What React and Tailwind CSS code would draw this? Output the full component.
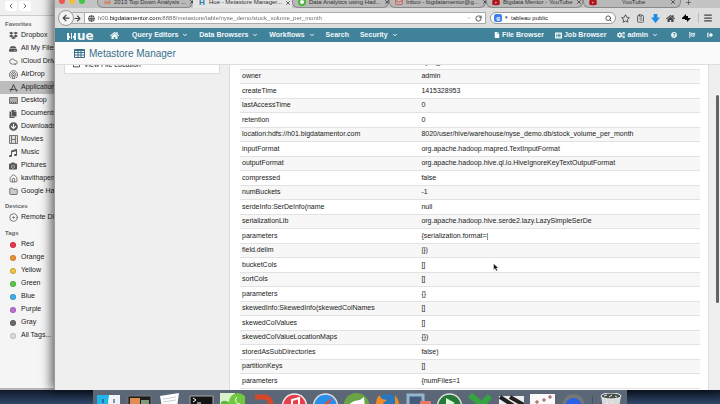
import React from "react";
import {
  FaHome, FaFile, FaListAlt, FaCogs, FaQuestionCircle, FaFlagCheckered, FaSignOutAlt,
  FaDropbox, FaHdd, FaCopy, FaArrowCircleDown, FaMusic, FaCamera, FaYoutube,
  FaArrowLeft, FaArrowRight, FaGlobe, FaRegStar, FaRegFolder,
} from "react-icons/fa";
import {
  Cloud, House, Disc, ChevronDown, ChevronLeft, ChevronRight, RotateCw, Search,
  ClipboardList, Menu, X, Plus, Mail, Radio, Folder,
} from "lucide-react";

const AppsIcon = () => (
  <svg viewBox="0 0 18 16" className="h-2 w-[9px]" fill="none" stroke="#444" strokeWidth="2">
    <path d="M3 15 9 1l6 14M1 11h10M13 9l4 5" />
  </svg>
);

const AirDropIcon = () => (
  <svg viewBox="0 0 18 18" className="size-[9px]" fill="none" stroke="#555" strokeWidth="1.5">
    <path d="M4 16a8.200 8.200 0 1 1 10 0M6 13.500a5 5 0 1 1 6 0M7.500 11a2.200 2.200 0 1 1 3 0M9 10l-3 7h6z" />
  </svg>
);

const DesktopIcon = () => (
  <svg viewBox="0 0 9 7" className="h-[7px] w-[9px]">
    <path d="M.5.5h8v6h-8z" fill="#aaa" stroke="#777" />
    <path d="M2 5.500h5" stroke="#555" strokeDasharray="1 1" />
  </svg>
);

const MoviesIcon = () => (
  <svg viewBox="0 0 9 9" className="size-[9px]" fill="#ddd" stroke="#777">
    <path d="M.5.5h8v8h-8zM2.500.5v8M6.500.5v8M2.500 4.500h4" />
  </svg>
);

const favorites = [
  ["Dropbox", <FaDropbox size={9} />],
  ["All My Files", <FaHdd size={8} />],
  ["iCloud Drive", <Cloud size={9} />],
  ["AirDrop", <AirDropIcon />],
  ["Applications", <AppsIcon />],
  ["Desktop", <DesktopIcon />],
  ["Documents", <FaCopy size={8} />],
  ["Downloads", <FaArrowCircleDown size={9} />],
  ["Movies", <MoviesIcon />],
  ["Music", <FaMusic size={8} />],
  ["Pictures", <FaCamera size={8} />],
  ["kavithapen", <House size={9} />],
  ["Google Hacks", <Folder size={9} fill="#ccc" />],
];

const tags = [
  ["Red", "bg-[#f0384a]"],
  ["Orange", "bg-[#ee9238]"],
  ["Yellow", "bg-[#f0c341]"],
  ["Green", "bg-[#5cc84c]"],
  ["Blue", "bg-[#3cb0ea]"],
  ["Purple", "bg-[#bd70d4]"],
  ["Gray", "bg-[#6b6b6b]"],
  ["All Tags...", "bg-[#dcdcdc]"],
];

const rows = [
  ["owner", "admin"],
  ["createTime", "1415328953"],
  ["lastAccessTime", "0"],
  ["retention", "0"],
  ["location:hdfs://h01.bigdatamentor.com", "8020/user/hive/warehouse/nyse_demo.db/stock_volume_per_month"],
  ["inputFormat", "org.apache.hadoop.mapred.TextInputFormat"],
  ["outputFormat", "org.apache.hadoop.hive.ql.io.HiveIgnoreKeyTextOutputFormat"],
  ["compressed", "false"],
  ["numBuckets", "-1"],
  ["serdeInfo:SerDeInfo(name", "null"],
  ["serializationLib", "org.apache.hadoop.hive.serde2.lazy.LazySimpleSerDe"],
  ["parameters", "{serialization.format=|"],
  ["field.delim", "|})"],
  ["bucketCols", "[]"],
  ["sortCols", "[]"],
  ["parameters", "{}"],
  ["skewedInfo:SkewedInfo(skewedColNames", "[]"],
  ["skewedColValues", "[]"],
  ["skewedColValueLocationMaps", "{})"],
  ["storedAsSubDirectories", "false)"],
  ["partitionKeys", "[]"],
  ["parameters", "{numFiles=1"],
];

function SideItem({ label, icon, active }) {
  return (
    <li>
      <button className={`flex h-[13px] w-full items-center gap-[3px] pl-2 text-left ${active ? "bg-[#bcbcbc]" : ""}`}>
        <span className="flex w-[10px] shrink-0 justify-center text-[#555]">{icon}</span>
        <span className="whitespace-nowrap">{label}</span>
      </button>
    </li>
  );
}

function Finder() {
  return (
    <aside className="absolute top-0 bottom-[14px] left-0 w-[200px] border-b-2 border-[#b5b5b5] bg-[#f5f5f5] text-[7px] text-[#222]">
      <div className="flex h-4 items-center gap-[2px] border-b border-[#ccc] bg-[#f0f0f0] pb-1 pl-[5px]">
        <button aria-label="Back" className="flex h-[10px] w-3 items-center justify-center rounded-xs bg-white"><ChevronLeft size={8} /></button>
        <button aria-label="Forward" className="flex h-[10px] w-3 items-center justify-center rounded-xs bg-white"><ChevronRight size={8} /></button>
      </div>
      <h2 className="flex h-[13px] items-center pt-1 pl-[5px] text-[6px] font-bold text-[#666]">Favorites</h2>
      <ul>
        {favorites.map(([label, icon]) => (
          <SideItem key={label} label={label} icon={icon} active={label === "Applications"} />
        ))}
      </ul>
      <h2 className="flex h-[13px] items-center pt-1 pl-[5px] text-[6px] font-bold text-[#666]">Devices</h2>
      <ul><SideItem label="Remote Disc" icon={<Disc size={9} />} /></ul>
      <h2 className="flex h-[14px] items-center pt-1 pl-[5px] text-[6px] font-bold text-[#666]">Tags</h2>
      <ul>
        {tags.map(([label, color]) => (
          <SideItem key={label} label={label} icon={<span className={`size-[6px] rounded-full border border-black/15 ${color}`} />} />
        ))}
      </ul>
    </aside>
  );
}

function Tab({ width, icon, label, active, center }) {
  return (
    <div className={`flex h-full shrink-0 items-center gap-[3px] pt-1 pr-1 pl-[5px] ${width} ${active ? "bg-[#e4e4e4]" : "rounded-b-md border-x border-b border-[#8a8a8a] bg-[#b9b9b9]"}`}>
      <span className="flex w-2 shrink-0 justify-center">{icon}</span>
      <span className={`flex-1 text-[6px] whitespace-nowrap ${center ? "text-center" : ""}`}>{label}</span>
      <button aria-label="Close tab"><X size={6} strokeWidth={3} /></button>
    </div>
  );
}

function Tabs() {
  return (
    <div className="flex h-[15px] items-center overflow-hidden bg-[#c4c4c4] text-[#333]">
      <div className="flex w-[42px] shrink-0 gap-1 pl-1">
        <span className="size-[6px] rounded-full bg-[#f2544d]" />
        <span className="size-[6px] rounded-full bg-[#f6bd3b]" />
        <span className="size-[6px] rounded-full bg-[#3fc644]" />
      </div>
      <Tab width="w-[96px]" label="2013 Top Down Analysis ..." icon={<Radio size={7} color="#e0592a" />} />
      <Tab width="w-[99px]" active label="Hue - Metastore Manager..." icon={<b className="text-[8px] text-[#2a7ba3]">H</b>} />
      <Tab width="w-[97px]" label="Data Analytics using Had..." icon={<span className="size-[8px] shrink-0 rounded-full border-2 border-[#4db43c] bg-white" />} />
      <Tab width="w-[97px]" label="Inbox - bigdatamentor@g..." icon={<Mail size={8} color="#d63a2e" />} />
      <Tab width="w-[97px]" label="Bigdata Mentor - YouTube" icon={<FaYoutube size={9} color="#b3141c" />} />
      <Tab width="w-[98px]" center label="YouTube" icon={<FaYoutube size={9} color="#b3141c" />} />
      <button aria-label="New tab" className="px-1 pt-[3px]"><Plus size={7} /></button>
    </div>
  );
}

function Toolbar() {
  return (
    <div className="flex h-5 items-center bg-[#dedede] pr-[7px] pl-[3px] text-[#444]">
      <button aria-label="Back" className="z-10 flex size-4 shrink-0 items-center justify-center rounded-full border border-[#999] bg-[#f4f4f4]"><FaArrowLeft size={8} /></button>
      <button aria-label="Forward" className="-ml-1 flex h-3 w-[14px] shrink-0 items-center justify-end border-y border-[#aaa] bg-[#ececec] pr-[3px]"><FaArrowRight size={7} /></button>
      <div className="flex h-3 min-w-0 flex-1 items-center gap-[3px] border border-[#aaa] bg-white px-[3px]">
        <FaGlobe size={7} className="shrink-0" />
        <input
          aria-label="Address"
          defaultValue="h00.bigdatamentor.com:8888/metastore/table/nyse_demo/stock_volume_per_month"
          className="min-w-0 flex-1 bg-[linear-gradient(90deg,#666_11px,#111_11px,#111_64px,#666_64px)] bg-clip-text text-[6px] text-transparent outline-none"
        />
        <ChevronDown size={6} className="text-[#aaa]" />
        <button aria-label="Reload"><RotateCw size={7} strokeWidth={3} /></button>
      </div>
      <div className="ml-1 flex h-3 w-[126px] shrink-0 items-center gap-[3px] rounded-full border border-[#999] bg-white px-[3px]">
        <span className="flex size-[8px] items-center justify-center rounded-xs bg-[#3f80e8] text-[6px] font-bold text-white">g</span>
        <span className="text-[5px]">▾</span>
        <input aria-label="Search the web" defaultValue="tableau public" className="w-0 min-w-0 flex-1 bg-transparent text-[6px] text-[#222] outline-none" />
        <Search size={7} strokeWidth={3} />
      </div>
      <div className="ml-[5px] flex shrink-0 items-center gap-[6px]">
        <button aria-label="Bookmark"><FaRegStar size={9} /></button>
        <button aria-label="Bookmarks list"><ClipboardList size={9} /></button>
        <button aria-label="Downloads" className="text-[#1d8bec]">
          <svg viewBox="0 0 10 10" className="size-[9px]" fill="currentColor"><path d="M3 0h4v4h3L5 10 0 4h3z" /></svg>
        </button>
        <button aria-label="Home"><FaHome size={9} /></button>
        <button aria-label="Announcements" className="text-black">
          <svg viewBox="0 0 10 10" className="size-[10px]" fill="currentColor"><path d="M1 5 5 1v2h2v2h3L6 9V7H4V6H1z" /></svg>
        </button>
        <button aria-label="Menu" className="ml-px border-l border-[#bbb] pl-1"><Menu size={10} strokeWidth={3} /></button>
      </div>
    </div>
  );
}

function NavItem({ label, menu, icon }) {
  return (
    <a href="#" className="flex items-center gap-[2px] whitespace-nowrap">
      {icon}
      {label}
      {menu && <ChevronDown size={6} strokeWidth={4} className="ml-[2px]" />}
    </a>
  );
}

function HueNav() {
  return (
    <nav className="flex h-[14px] items-center justify-between bg-[#41829b] pr-[7px] pl-[11px] text-[7px] font-bold text-[#f0f8fa]">
      <div className="flex items-center gap-[11px]">
        <a href="#" aria-label="Hue" className="flex h-[14px] w-[30px] items-center pt-px">
          <svg viewBox="0 0 11 8" className="h-2 w-[11px]" fill="none" stroke="currentColor" strokeWidth="2">
            <path d="M2 8V1M2 5h2M9 8V1M7 5h2" />
            <path d="M5.500 1v6" strokeWidth="1" />
          </svg>
          <span className="font-['DejaVu_Sans'] text-[12px] leading-[10px]">ue</span>
        </a>
        <a href="#" aria-label="Home" className="mr-[2px] ml-[3px]"><FaHome size={9} /></a>
        <NavItem label="Query Editors" menu />
        <NavItem label="Data Browsers" menu />
        <NavItem label="Workflows" menu />
        <NavItem label="Search" />
        <NavItem label="Security" menu />
      </div>
      <div className="flex items-center gap-[11px]">
        <NavItem label="File Browser" icon={<FaFile size={6} />} />
        <NavItem label="Job Browser" icon={<FaListAlt size={7} />} />
        <NavItem label="admin" menu icon={<FaCogs size={8} />} />
        <div className="flex items-center gap-3">
          <a href="#" aria-label="Help" className="ml-[2px]"><FaQuestionCircle size={6} /></a>
          <a href="#" aria-label="Tour"><FaFlagCheckered size={6} /></a>
          <a href="#" aria-label="Sign out"><FaSignOutAlt size={6} /></a>
        </div>
      </div>
    </nav>
  );
}

function Browser() {
  return (
    <main className="absolute -top-[7px] right-0 bottom-[14px] left-[54px] flex flex-col border-l border-[#999] bg-[#efefef] shadow-[-3px_0_10px_rgba(0,0,0,0.6)]">
      <Tabs />
      <Toolbar />
      <HueNav />
      <header className="z-10 flex h-[23px] shrink-0 items-center gap-1 border-b border-[#ddd] bg-[#fafafa] pl-[19px] text-[#38708a]">
        <svg viewBox="0 0 11 9" className="h-[9px] w-[11px]" fill="none" stroke="currentColor">
          <path d="M.5.5h10v8H.5zM0 1.500h11M0 3.500h11M0 6h11M4 1v8M7 1v8" strokeWidth="1" />
        </svg>
        <h1 className="text-[10px]">Metastore Manager</h1>
      </header>
      <div className="flex min-h-0 flex-1 overflow-hidden">
        <div className="w-[174px] shrink-0 px-[9px]">
          <div className="-mt-[7px] flex h-4 items-start gap-1 border border-[#ddd] bg-white pl-2 text-[7px] leading-[11px] text-[#222]">
            <FaRegFolder size={7} className="mt-[2px]" />
            <a href="#">View File Location</a>
          </div>
        </div>
        <section className="min-w-0 flex-1 border-x border-[#ddd] bg-white pr-2 pl-[10px]">
          <table className="-mt-[10px] w-full table-fixed border-collapse text-[7px] leading-[10px] text-[#222]">
            <colgroup><col className="w-[39%]" /><col /></colgroup>
            <tbody>
              <tr className="h-[14px]"><td className="p-0 pl-[2px]">dbName</td><td className="p-0 pl-[2px]">nyse_demo</td></tr>
              {rows.map(([key, value], i) => (
                <tr key={i} className="border-t border-[#e2e2e2] odd:h-[15px] even:h-[14px] even:bg-[#f7f7f7]">
                  <td className="p-0 pl-[2px]">{key}</td>
                  <td className="p-0 pl-[2px]">{value}</td>
                </tr>
              ))}
              <tr className="border-t border-[#e2e2e2]"><td className="p-0" /><td className="p-0" /></tr>
            </tbody>
          </table>
        </section>
        <div className="flex w-[11px] shrink-0 justify-end pt-[30px]">
          <div className="mr-px h-[208px] w-[3px] rounded-full bg-[#636363]" />
        </div>
      </div>
    </main>
  );
}

const dockIcons = [
  ["Finder", <><path fill="#22b5ea" d="M1 2h23v12H1z" /><path fill="#eef3f8" d="M13 2h11v12H12q0-6 1-12z" /><path stroke="#1b3850" d="M7 6v4M18 6v4" /></>],
  ["Desktop preview", <><path fill="#1c1c1c" stroke="#777" d="M1 3h23v12H1z" /><path fill="#e38b54" d="M3 5h10v9H3z" /><path fill="#7e9c7b" d="M14 7h8v7h-8z" /></>],
  ["Documents", <><path fill="#fff" d="M2 3 21 0l-2 14H4z" /><path stroke="#ccc" d="M5 6l13-2M5 9l13-2" /></>],
  ["Terminal", <><path fill="#151515" stroke="#aaa" d="M1 3h23v12H1z" /><path fill="none" stroke="#fff" d="m4 5 3 2-3 2M8 10h4" /></>],
  ["Camtasia", <><path fill="#d9f2cd" d="M0 0h15v14H0z" /><path fill="#5fb83c" d="M1 9q6-4 12 5H1z" /><circle cx="18" cy="9" r="9" fill="#6fc83e" /><path stroke="#fff" fill="none" d="M17 4a4 4 0 0 0 3 7" /></>],
  ["Java tool", <path fill="none" stroke="#d9472b" strokeWidth="5" d="M4 4h9q7 0 7 10" />],
  ["iTunes", <><circle cx="12.500" cy="13" r="12" fill="#e83e4b" stroke="#eee" strokeWidth="1.500" /><path fill="none" stroke="#fff" strokeWidth="2" d="M10 14V7l7-2v9" /></>],
  ["Safari", <><circle cx="12.500" cy="13" r="12" fill="#2a8fe9" stroke="#ddd" strokeWidth="1.500" /><path fill="#e9483c" d="m20 4-9 7 3 3z" /><path fill="#fff" d="m11 11-5 7 8-4z" /></>],
  ["Spring", <><circle cx="12.500" cy="13" r="13" fill="#6aa545" /><path fill="#fff" d="M4 14q2-6 12-7l4-3 1 10z" /></>],
  ["Firefox", <><circle cx="12.500" cy="12" r="11" fill="#2878bd" /><path fill="#f28a23" d="M1 14Q0 7 4 2l3 4 5 1-4 3 1 4zM20 2q5 6 4 12h-4z" /></>],
  ["Virtual machines", <><path fill="#435c7c" stroke="#93b5cf" strokeWidth="3" d="M2 2h15v14H2z" /><path fill="#e87863" d="M14 8h11v6H14z" /></>],
  ["Player", <><circle cx="12.500" cy="13" r="12" fill="#247937" stroke="#ddd" strokeWidth="1.500" /><path fill="#d9ffd2" d="m9 5 9 5-9 5z" /></>],
  ["Excel", <path stroke="#36a440" strokeWidth="6" d="m2 2 16 13M22 3 10 16" />],
  ["Pens", <><path fill="#eee" d="M0 3h25v11H0z" /><path stroke="#222" strokeWidth="4" d="m1 4 14 9M11 4l14 8" /></>],
  ["Grapher", <><path fill="#fafafa" d="M0 1h25v13H0z" /><path stroke="#a34b50" d="M5 9h4M7 7v4M12 7h4M14 5v4M18 4h4M20 2v4" /></>],
  ["Camera", <><circle cx="12.500" cy="12" r="11" fill="#777" /><circle cx="12.500" cy="13" r="8" fill="#2761e8" /></>],
];

function DockIcon({ name, art }) {
  return (
    <button aria-label={name} className="shrink-0">
      <svg viewBox="0 0 25 11" className="h-[11px] w-[25px]">{art}</svg>
    </button>
  );
}

function Dock() {
  return (
    <div className="absolute bottom-0 left-[93px] flex h-[14px] w-[534px] items-end justify-between overflow-hidden bg-[#5b6677] px-[3px]">
      {dockIcons.map(([name, art]) => <DockIcon key={name} name={name} art={art} />)}
      <span className="h-2 w-px bg-[#465163]" />
      <DockIcon name="Trash" art={<><path fill="#d8dadb" d="M2 3h20l-2 12H4z" /><ellipse cx="12" cy="3" rx="10" ry="3" fill="#4a504c" stroke="#eee" /><path stroke="#eee" d="m5 3 3-1M10 4l3-2M16 3l2 1M8 8v4M13 8v4" /></>} />
    </div>
  );
}

export default function App() {
  return (
    <div className="relative h-screen overflow-hidden bg-linear-to-b from-[#0b1320] from-96% to-[#30486b] font-['Liberation_Sans',Arial,sans-serif]">
      <Finder />
      <Browser />
      <Dock />
      <svg viewBox="0 0 12 18" className="absolute top-[263px] left-[493px] h-[9px] w-[6px]">
        <path d="M1 1v13l3-3 2 5 3-1-2-5h4z" fill="#111" stroke="#fff" />
      </svg>
    </div>
  );
}
